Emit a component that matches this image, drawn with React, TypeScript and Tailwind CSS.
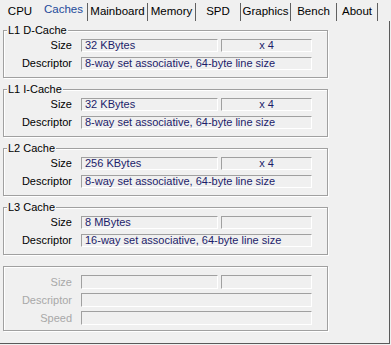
const FONT = "font-['Liberation_Sans',Arial,sans-serif]";

const tabs = [
  { label: 'CPU', w: 'w-[40px]' },
  { label: 'Caches', w: 'w-[47px]', active: true },
  { label: 'Mainboard', w: 'w-[60px]' },
  { label: 'Memory', w: 'w-[48px]' },
  { label: 'SPD', w: 'w-[45px]' },
  { label: 'Graphics', w: 'w-[50px]' },
  { label: 'Bench', w: 'w-[46px]' },
  { label: 'About', w: 'w-[41px]' },
];

const caches = [
  { name: 'L1 D-Cache', size: '32 KBytes', ways: 'x 4', desc: '8-way set associative, 64-byte line size' },
  { name: 'L1 I-Cache', size: '32 KBytes', ways: 'x 4', desc: '8-way set associative, 64-byte line size' },
  { name: 'L2 Cache', size: '256 KBytes', ways: 'x 4', desc: '8-way set associative, 64-byte line size' },
  { name: 'L3 Cache', size: '8 MBytes', ways: '', desc: '16-way set associative, 64-byte line size' },
];

function Field({ value = '', className = '', center = false }: { value?: string; className?: string; center?: boolean }) {
  return (
    <div
      className={`h-full border-t border-l border-t-[#a0a0a0] border-l-[#a0a0a0] border-b border-r border-b-white border-r-white flex items-center px-[3px] text-[11px] leading-none text-[#1c1c6a] whitespace-nowrap overflow-hidden ${center ? 'justify-center' : ''} ${className}`}
    >
      {value}
    </div>
  );
}

function Row({ label, children, disabled = false, h = 'h-[13px]' }: { label: string; children: React.ReactNode; disabled?: boolean; h?: string }) {
  return (
    <div className={`flex items-center ${h}`}>
      <div
        className={`w-[68px] text-right text-[11px] leading-none ${disabled ? 'text-[#a8a8a8]' : 'text-black'}`}
      >
        {label}
      </div>
      <div className="ml-[9px] w-[231px] h-full flex gap-[3px]">{children}</div>
    </div>
  );
}

function Group({ title, children, className = '' }: { title?: string; children: React.ReactNode; className?: string }) {
  return (
    <div className={`relative w-[325px] border border-[#a0a0a0] shadow-[1px_1px_0_#fff,inset_1px_1px_0_#fff] ${className}`}>
      {title && (
        <span className="absolute -top-[7px] left-[3px] bg-[#f0f0f0] px-[1px] text-[11px] leading-[13px] text-black">
          {title}
        </span>
      )}
      {children}
    </div>
  );
}

export default function App() {
  return (
    <div className={`w-[391px] h-[345px] bg-[#f0f0f0] overflow-hidden flex flex-col ${FONT}`}>
      {/* tab strip */}
      <div className="h-[21px] flex items-end">
        {tabs.map((t) => (
          <div
            key={t.label}
            className={`${t.w} flex items-center justify-center text-[11.5px] ${
              t.active ? 'text-[#1e4a9a] h-[21px] pb-[2px]' : 'text-black h-[18px]'
            } ${t.active || t.label === 'CPU' ? '' : 'border-l border-l-[#606060]'}`}
          >
            {t.label}
          </div>
        ))}
        <div className="w-px h-[18px] bg-[#606060]" />
      </div>

      {/* tab page */}
      <div className="flex-1 flex flex-col gap-[11px] pl-[3px] pt-[9px] border-r border-b border-[#5a5a5a] mr-[1px] mb-[1px]">
        {caches.map((c) => (
          <Group key={c.name} title={c.name} className="h-[48px] pt-[8px]">
            <div className="flex flex-col gap-[5px]">
              <Row label="Size">
                <Field value={c.size} className="w-[137px]" />
                <Field value={c.ways} className="flex-1" center />
              </Row>
              <Row label="Descriptor">
                <Field value={c.desc} className="flex-1" />
              </Row>
            </div>
          </Group>
        ))}

        <Group className="h-[65px] pt-[8px]">
          <div className="flex flex-col gap-[4px]">
            <Row label="Size" disabled h="h-[14px]">
              <Field className="w-[137px]" />
              <Field className="flex-1" />
            </Row>
            <Row label="Descriptor" disabled h="h-[14px]">
              <Field className="flex-1" />
            </Row>
            <Row label="Speed" disabled h="h-[14px]">
              <Field className="flex-1" />
            </Row>
          </div>
        </Group>
      </div>
    </div>
  );
}
